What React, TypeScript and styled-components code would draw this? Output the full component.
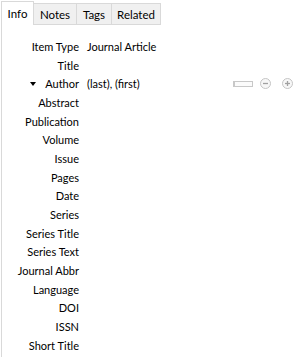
import React from "react";
import styled, { createGlobalStyle } from "styled-components";

const GlobalStyle = createGlobalStyle`
  html, body {
    margin: 0;
    padding: 0;
    background: #ffffff;
  }
  body {
    font-family: Lato, "Noto Sans", sans-serif;
    font-size: 11px;
    color: #000000;
  }
`;

const Pane = styled.div`
  width: 300px;
  height: 357px;
  overflow: hidden;
  display: flex;
  flex-direction: column;
`;

const TabBar = styled.div`
  display: flex;
  align-items: flex-end;
  height: 25px;
  padding-left: 1px;
`;

const Tab = styled.div<{ $active?: boolean; $width: number }>`
  width: ${(p) => p.$width}px;
  height: ${(p) => (p.$active ? "24px" : "22px")};
  box-sizing: border-box;
  display: flex;
  align-items: center;
  justify-content: center;
  font-size: 11.5px;
  background: ${(p) => (p.$active ? "#ffffff" : "#f0f0f0")};
  border: 1px solid #d9d9d9;
  border-bottom: ${(p) => (p.$active ? "none" : "1px solid #d9d9d9")};
  margin-left: -1px;
  &:first-child {
    margin-left: 0;
  }
`;

const Body = styled.div`
  flex: 1;
  border-left: 1px solid #d9d9d9;
  margin-left: 1px;
  padding-top: 12px;
`;

const Fields = styled.div`
  display: grid;
  grid-template-columns: 77px 1fr;
  column-gap: 8px;
  grid-auto-rows: 18.7px;
  align-items: center;
`;

const Label = styled.div`
  display: flex;
  justify-content: flex-end;
  align-items: center;
  white-space: nowrap;
`;

const Twisty = styled.span`
  width: 0;
  height: 0;
  border-left: 3.5px solid transparent;
  border-right: 3.5px solid transparent;
  border-top: 4px solid #000;
  margin-right: auto;
  margin-left: 28px;
`;

const Value = styled.div`
  display: flex;
  align-items: center;
  white-space: nowrap;
  padding-right: 7px;
`;

const Spacer = styled.div`
  flex: 1;
`;

const SwitchBox = styled.div`
  width: 17px;
  height: 4px;
  border: 1px solid #c8c8c8;
  border-left: 2px solid #c8c8c8;
  background: #fbfbfb;
`;

const RoundButton = styled.div<{ $gap: number }>`
  width: 11px;
  height: 11px;
  margin-left: ${(p) => p.$gap}px;
  display: flex;
`;

const tabs = [
  { name: "Info", width: 33 },
  { name: "Notes", width: 44 },
  { name: "Tags", width: 36 },
  { name: "Related", width: 50 },
];

const fields = [
  "Item Type",
  "Title",
  "Author",
  "Abstract",
  "Publication",
  "Volume",
  "Issue",
  "Pages",
  "Date",
  "Series",
  "Series Title",
  "Series Text",
  "Journal Abbr",
  "Language",
  "DOI",
  "ISSN",
  "Short Title",
];

const Circle = ({ plus }: { plus?: boolean }) => (
  <svg width="11" height="11" viewBox="0 0 11 11">
    <circle cx="5.5" cy="5.5" r="5" fill="#f7f7f7" stroke="#c4c4c4" />
    <line x1="3" y1="5.5" x2="8" y2="5.5" stroke="#a0a0a0" strokeWidth="1.3" />
    {plus && <line x1="5.5" y1="3" x2="5.5" y2="8" stroke="#a0a0a0" strokeWidth="1.3" />}
  </svg>
);

export default function App() {
  return (
    <Pane>
      <GlobalStyle />
      <TabBar>
        {tabs.map((t, i) => (
          <Tab key={t.name} $active={i === 0} $width={t.width}>
            {t.name}
          </Tab>
        ))}
      </TabBar>
      <Body>
        <Fields>
          {fields.map((f) => (
            <React.Fragment key={f}>
              <Label>
                {f === "Author" && <Twisty />}
                {f}
              </Label>
              <Value>
                {f === "Item Type" && "Journal Article"}
                {f === "Author" && (
                  <>
                    (last), (first)
                    <Spacer />
                    <SwitchBox />
                    <RoundButton $gap={7}>
                      <Circle />
                    </RoundButton>
                    <RoundButton $gap={11}>
                      <Circle plus />
                    </RoundButton>
                  </>
                )}
              </Value>
            </React.Fragment>
          ))}
        </Fields>
      </Body>
    </Pane>
  );
}
